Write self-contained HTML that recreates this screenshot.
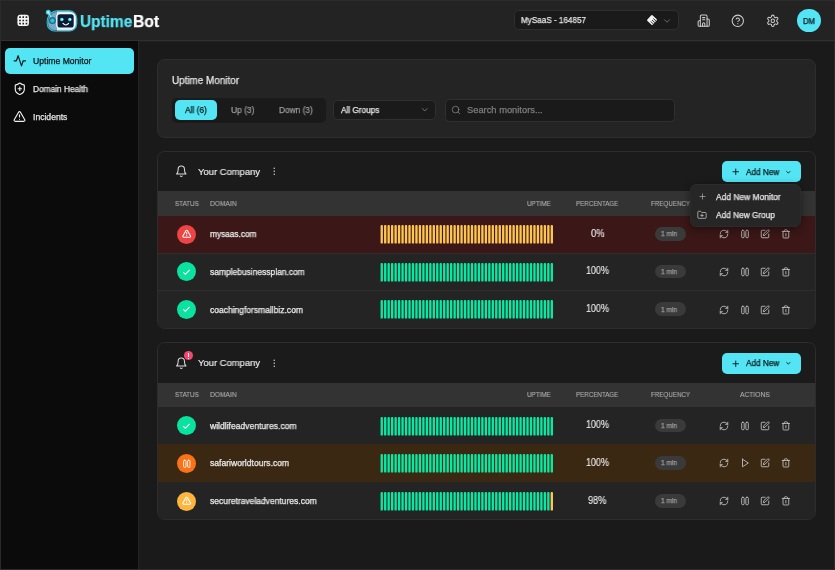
<!DOCTYPE html>
<html lang="en"><head><meta charset="utf-8"><title>UptimeBot - Uptime Monitor</title>
<style>
html,body{margin:0;padding:0;background:#1a1a1a;}
body{width:835px;height:570px;position:relative;overflow:hidden;font-family:"Liberation Sans",sans-serif;}
.b{position:absolute;}
.i{position:absolute;overflow:visible;}
.t{position:absolute;white-space:nowrap;line-height:1;will-change:transform;transform-origin:0 0;}
</style></head><body>
<div class="b" style="left:0px;top:0px;width:835px;height:570px;background:#1a1a1a;border-radius:0px;"></div>
<header>
<div class="b" style="left:0px;top:0px;width:835px;height:40px;background:#232323;border-radius:0px;"></div>
<div class="b" style="left:0px;top:40px;width:835px;height:1px;background:#303030;border-radius:0px;"></div>
<div class="b" style="left:0px;top:41px;width:835px;height:1px;background:#212121;border-radius:0px;"></div>
<svg class="i" style="left:16.9px;top:13.6px" width="12.4" height="12.8" viewBox="0 0 24 24" fill="none" stroke="#f6f6f6" stroke-width="3.1" stroke-linecap="round" stroke-linejoin="round"><rect x="2.500" y="2.500" width="19" height="19" rx="3"/><path d="M2.500 9h19M2.500 15.200h19M9 2.500v19M15.200 2.500v19"/></svg>
<svg class="i" style="left:44px;top:8px" width="35" height="25" viewBox="44 8 35 25">
<path d="M48.400 12.400 L51.600 18" stroke="#2fd3e8" stroke-width="2.600" stroke-linecap="round"/>
<circle cx="48.300" cy="12.300" r="2.500" fill="#2fd3e8"/>
<path d="M58 10.300 H69.300 a8 8 0 0 1 8 8 V23.600 a8 8 0 0 1 -8 8 H54.700 a8 8 0 0 1 -8 -8 V21.600 a11.300 11.300 0 0 1 11.300 -11.300 Z" fill="#2fd3e8"/>
<path d="M58 11.400 H69.200 a7 7 0 0 1 7 7 V23.500 a7 7 0 0 1 -7 7 H54.800 a7 7 0 0 1 -7 -7 V21.600 a10.200 10.200 0 0 1 10.200 -10.200 Z" fill="#7aa9c8" stroke="#123a5a" stroke-width="0.500"/>
<path d="M57 11.450 H69.200 a7 7 0 0 1 7 7 V23.500 a7 7 0 0 1 -7 7 H57 Z" fill="#d6ebf8"/>
<path d="M48.500 12.500 L51.500 17.800" stroke="#c9eef7" stroke-width="0.900" stroke-linecap="round"/>
<circle cx="48.300" cy="12.300" r="1.150" fill="#eafcff"/>
<circle cx="52.400" cy="20.600" r="3.500" fill="#176f88"/>
<circle cx="52.400" cy="20.600" r="2.200" fill="#36bdd6"/>
<rect x="56.200" y="13" width="18.800" height="15.800" rx="3.600" fill="#f4f9fc"/>
<rect x="57.500" y="14.300" width="16.200" height="13.200" rx="2.600" fill="#0b1d36"/>
<circle cx="61.800" cy="19.600" r="1.750" fill="#4fdff1"/><circle cx="62.200" cy="19.200" r="0.700" fill="#fff"/>
<circle cx="69.800" cy="19.600" r="1.750" fill="#4fdff1"/><circle cx="70.200" cy="19.200" r="0.700" fill="#fff"/>
<path d="M63 23.400 Q65.800 26.600 68.600 23.400" stroke="#ffffff" stroke-width="1.200" fill="none" stroke-linecap="round"/>
</svg>
<div class="b" style="left:513.5px;top:10.3px;width:165px;height:20px;background:#1a1a1a;border-radius:4.5px;border:1px solid #2f2f2f;box-sizing:border-box;"></div>
<svg class="i" style="left:645.5px;top:14px" width="12" height="12" viewBox="0 0 24 24"><g transform="rotate(42 12 12)"><rect x="4.500" y="4.500" width="15" height="15" rx="2" fill="#f3f3f3"/><path d="M12 8h8M12 12h8M12 16h8" stroke="#1a1a1a" stroke-width="1.600"/></g></svg>
<svg class="i" style="left:662.40px;top:15.70px;z-index:0" width="10" height="10" viewBox="0 0 24 24" fill="none" stroke="#7a7a7a" stroke-width="2" stroke-linecap="round" stroke-linejoin="round" ><path d="m6 9 6 6 6-6"/></svg>
<svg class="i" style="left:696.70px;top:13.80px;z-index:0" width="13.4" height="13.4" viewBox="0 0 24 24" fill="none" stroke="#cfcfcf" stroke-width="1.8" stroke-linecap="round" stroke-linejoin="round" ><path d="M6 22V4a2 2 0 0 1 2-2h8a2 2 0 0 1 2 2v18Z"/><path d="M6 12H4a2 2 0 0 0-2 2v6a2 2 0 0 0 2 2h2"/><path d="M18 9h2a2 2 0 0 1 2 2v9a2 2 0 0 1-2 2h-2"/><path d="M10 6.500h4"/><path d="M10 10.500h4"/><path d="M10 22v-4.500a2 2 0 0 1 4 0V22"/></svg>
<svg class="i" style="left:731.20px;top:13.80px;z-index:0" width="13.6" height="13.6" viewBox="0 0 24 24" fill="none" stroke="#cfcfcf" stroke-width="1.8" stroke-linecap="round" stroke-linejoin="round" ><circle cx="12" cy="12" r="10"/><path d="M9.090 9a3 3 0 0 1 5.830 1c0 2-3 3-3 3"/><path d="M12 17h.01"/></svg>
<svg class="i" style="left:765.90px;top:13.80px;z-index:0" width="13.6" height="13.6" viewBox="0 0 24 24" fill="none" stroke="#cfcfcf" stroke-width="1.8" stroke-linecap="round" stroke-linejoin="round" ><path d="M12.220 2h-.440a2 2 0 0 0-2 2v.180a2 2 0 0 1-1 1.730l-.430.250a2 2 0 0 1-2 0l-.150-.080a2 2 0 0 0-2.730.730l-.220.380a2 2 0 0 0 .730 2.730l.150.100a2 2 0 0 1 1 1.720v.510a2 2 0 0 1-1 1.740l-.150.090a2 2 0 0 0-.730 2.730l.220.380a2 2 0 0 0 2.730.730l.150-.080a2 2 0 0 1 2 0l.430.250a2 2 0 0 1 1 1.730V20a2 2 0 0 0 2 2h.440a2 2 0 0 0 2-2v-.180a2 2 0 0 1 1-1.730l.430-.250a2 2 0 0 1 2 0l.150.080a2 2 0 0 0 2.730-.730l.220-.390a2 2 0 0 0-.730-2.730l-.150-.080a2 2 0 0 1-1-1.740v-.500a2 2 0 0 1 1-1.740l.150-.090a2 2 0 0 0 .730-2.730l-.220-.380a2 2 0 0 0-2.730-.730l-.150.080a2 2 0 0 1-2 0l-.430-.250a2 2 0 0 1-1-1.730V4a2 2 0 0 0-2-2z"/><circle cx="12" cy="12" r="3"/></svg>
<div class="b" style="left:796.8px;top:8.6px;width:23.8px;height:23.8px;background:#53e5f4;border-radius:13px;"></div>
<span class="t" style="left:80.20px;top:13.12px;font-size:16.4px;transform:scaleX(0.9413);color:#53e5f4;font-weight:700;z-index:1;-webkit-text-stroke:0.25px #53e5f4">Uptime</span>
<span class="t" style="left:132.70px;top:13.12px;font-size:16.4px;transform:scaleX(0.9593);color:#ffffff;font-weight:700;z-index:1;-webkit-text-stroke:0.25px #ffffff">Bot</span>
<span class="t" style="left:520.70px;top:16.20px;font-size:8.8px;transform:scaleX(0.9230);color:#e6e6e6;z-index:1;-webkit-text-stroke:0.25px #e6e6e6">MySaaS - 164857</span>
<span class="t" style="left:802.50px;top:16.75px;font-size:8.3px;transform:scaleX(0.9220);color:#0c1416;z-index:1;-webkit-text-stroke:0.25px #0c1416">DM</span>
</header>
<nav>
<div class="b" style="left:0px;top:41px;width:138px;height:529px;background:#0b0b0b;border-radius:0px;"></div>
<div class="b" style="left:138px;top:41px;width:1px;height:529px;background:#242424;border-radius:0px;"></div>
<div class="b" style="left:5px;top:48px;width:129px;height:25.7px;background:#53e5f4;border-radius:5px;"></div>
<svg class="i" style="left:13.10px;top:54.20px;z-index:0" width="13.6" height="13.6" viewBox="0 0 24 24" fill="none" stroke="#0a1a1e" stroke-width="2.1" stroke-linecap="round" stroke-linejoin="round" ><path d="M22 12h-4l-3 9L9 3l-3 9H2"/></svg>
<svg class="i" style="left:12.90px;top:82.10px;z-index:0" width="13.6" height="13.6" viewBox="0 0 24 24" fill="none" stroke="#f0f0f0" stroke-width="2" stroke-linecap="round" stroke-linejoin="round" ><path d="M20 13c0 5-3.5 7.500-7.660 8.950a1 1 0 0 1-.670-.010C7.500 20.500 4 18 4 13V6a1 1 0 0 1 1-1c2 0 4.500-1.200 6.240-2.720a1.170 1.170 0 0 1 1.520 0C14.510 3.810 17 5 19 5a1 1 0 0 1 1 1z"/><path d="M9 12h6"/><path d="M12 9v6"/></svg>
<svg class="i" style="left:13.30px;top:109.90px;z-index:0" width="13" height="13" viewBox="0 0 24 24" fill="none" stroke="#f0f0f0" stroke-width="2.1" stroke-linecap="round" stroke-linejoin="round" ><path d="m21.730 18-8-14a2 2 0 0 0-3.480 0l-8 14A2 2 0 0 0 4 21h16a2 2 0 0 0 1.730-3"/><path d="M12 9v4"/><path d="M12 17h.01"/></svg>
<span class="t" style="left:32.70px;top:56.80px;font-size:8.6px;transform:scaleX(1.0006);color:#0c1416;z-index:1;-webkit-text-stroke:0.25px #0c1416">Uptime Monitor</span>
<span class="t" style="left:32.70px;top:84.70px;font-size:8.6px;transform:scaleX(0.9676);color:#e6e6e6;z-index:1;-webkit-text-stroke:0.25px #e6e6e6">Domain Health</span>
<span class="t" style="left:32.70px;top:112.80px;font-size:8.6px;transform:scaleX(0.9969);color:#e6e6e6;z-index:1;-webkit-text-stroke:0.25px #e6e6e6">Incidents</span>
</nav>
<main>
<section>
<div class="b" style="left:157px;top:59.4px;width:658.7px;height:78.2px;background:#242424;border-radius:7.5px;border:1px solid #2e2e2e;box-sizing:border-box;"></div>
<div class="b" style="left:172px;top:97.5px;width:154px;height:25px;background:#1a1a1a;border-radius:5px;"></div>
<div class="b" style="left:175.3px;top:100.4px;width:41.4px;height:19.4px;background:#53e5f4;border-radius:5px;"></div>
<div class="b" style="left:333.2px;top:100px;width:103.2px;height:20.2px;background:#1a1a1a;border-radius:4.5px;border:1px solid #303030;box-sizing:border-box;"></div>
<svg class="i" style="left:420.05px;top:105.45px;z-index:0" width="9.5" height="9.5" viewBox="0 0 24 24" fill="none" stroke="#8a8a8a" stroke-width="2" stroke-linecap="round" stroke-linejoin="round" ><path d="m6 9 6 6 6-6"/></svg>
<div class="b" style="left:444.5px;top:98.5px;width:230.5px;height:23px;background:#1a1a1a;border-radius:4.5px;border:1px solid #303030;box-sizing:border-box;"></div>
<svg class="i" style="left:450.50px;top:105.00px;z-index:0" width="10" height="10" viewBox="0 0 24 24" fill="none" stroke="#7d7d7d" stroke-width="2" stroke-linecap="round" stroke-linejoin="round" ><circle cx="11" cy="11" r="8"/><path d="m21 21-4.300-4.300"/></svg>
<span class="t" style="left:171.80px;top:75.82px;font-size:10.2px;transform:scaleX(0.9714);color:#e6e6e6;z-index:1;-webkit-text-stroke:0.25px #e6e6e6">Uptime Monitor</span>
<span class="t" style="left:185.20px;top:105.70px;font-size:8.8px;transform:scaleX(0.9485);color:#0c1416;z-index:1;-webkit-text-stroke:0.25px #0c1416">All (6)</span>
<span class="t" style="left:230.90px;top:105.70px;font-size:8.8px;transform:scaleX(0.9610);color:#9a9a9a;z-index:1;-webkit-text-stroke:0.25px #9a9a9a">Up (3)</span>
<span class="t" style="left:278.70px;top:105.70px;font-size:8.8px;transform:scaleX(0.9471);color:#9a9a9a;z-index:1;-webkit-text-stroke:0.25px #9a9a9a">Down (3)</span>
<span class="t" style="left:340.60px;top:106.00px;font-size:8.8px;transform:scaleX(0.9324);color:#e6e6e6;z-index:1;-webkit-text-stroke:0.25px #e6e6e6">All Groups</span>
<span class="t" style="left:467.30px;top:105.50px;font-size:8.8px;transform:scaleX(1.0604);color:#7d7d7d;z-index:1;-webkit-text-stroke:0.25px #7d7d7d">Search monitors...</span>
</section>
<section>
<div class="b" style="left:157px;top:151px;width:659px;height:178px;background:#1b1b1b;border-radius:7.500px;border:1px solid #2d2d2d;box-sizing:border-box;overflow:hidden"><div class="b" style="left:0;top:39px;width:660px;height:25px;background:#333333"></div><div class="b" style="left:0;top:64px;width:660px;height:39px;background:#3b1717;border-top:1px solid #3b1717;box-sizing:border-box"></div><div class="b" style="left:0;top:101px;width:660px;height:39px;background:#242424;border-top:1px solid #2e2e2e;box-sizing:border-box"></div><div class="b" style="left:0;top:138px;width:660px;height:40px;background:#242424;border-top:1px solid #2e2e2e;box-sizing:border-box"></div></div>
<svg class="i" style="left:174.70px;top:165.30px;z-index:0" width="12.6" height="12.6" viewBox="0 0 24 24" fill="none" stroke="#d8d8d8" stroke-width="2" stroke-linecap="round" stroke-linejoin="round" ><path d="M6 8a6 6 0 0 1 12 0c0 7 3 9 3 9H3s3-2 3-9"/><path d="M10.300 21a1.940 1.940 0 0 0 3.400 0"/></svg>
<svg class="i" style="left:269.25px;top:166.15px;z-index:0" width="10.5" height="10.5" viewBox="0 0 24 24" fill="none" stroke="#d0d0d0" stroke-width="2" stroke-linecap="round" stroke-linejoin="round" ><circle cx="12" cy="5" r="1.700" fill="#d0d0d0" stroke="none"/><circle cx="12" cy="12" r="1.700" fill="#d0d0d0" stroke="none"/><circle cx="12" cy="19" r="1.700" fill="#d0d0d0" stroke="none"/></svg>
<div class="b" style="left:721.7px;top:160.9px;width:79.4px;height:21.4px;background:#53e5f4;border-radius:5px;"></div>
<svg class="i" style="left:730.85px;top:167.05px;z-index:0" width="9.5" height="9.5" viewBox="0 0 24 24" fill="none" stroke="#0c1416" stroke-width="2.3" stroke-linecap="round" stroke-linejoin="round" ><path d="M5 12h14"/><path d="M12 5v14"/></svg>
<svg class="i" style="left:785.00px;top:168.60px;z-index:0" width="6.6" height="6.6" viewBox="0 0 24 24" fill="none" stroke="#0c1416" stroke-width="3.2" stroke-linecap="round" stroke-linejoin="round" ><path d="m6 9 6 6 6-6"/></svg>
<div class="b" style="left:177.1px;top:224.60000000000002px;width:19px;height:19px;background:#ef4444;border-radius:10px;"></div>
<svg class="i" style="left:181.90px;top:228.90px;z-index:0" width="9.4" height="9.4" viewBox="0 0 24 24" fill="none" stroke="#fff" stroke-width="2.7" stroke-linecap="round" stroke-linejoin="round" ><path d="m21.730 18-8-14a2 2 0 0 0-3.480 0l-8 14A2 2 0 0 0 4 21h16a2 2 0 0 0 1.730-3"/><path d="M12 9v4"/><path d="M12 17h.01"/></svg>
<svg class="i" style="left:0;top:225.00px" width="835" height="18.6" viewBox="0 0 835 18.6"><rect x="380.55" y="0" width="2.36" height="18.6" rx="0.900" fill="#fdc650"/><rect x="384.02" y="0" width="2.36" height="18.6" rx="0.900" fill="#fdc650"/><rect x="387.49" y="0" width="2.36" height="18.6" rx="0.900" fill="#fdc650"/><rect x="390.97" y="0" width="2.36" height="18.6" rx="0.900" fill="#fdc650"/><rect x="394.44" y="0" width="2.36" height="18.6" rx="0.900" fill="#fdc650"/><rect x="397.91" y="0" width="2.36" height="18.6" rx="0.900" fill="#fdc650"/><rect x="401.38" y="0" width="2.36" height="18.6" rx="0.900" fill="#fdc650"/><rect x="404.85" y="0" width="2.36" height="18.6" rx="0.900" fill="#fdc650"/><rect x="408.33" y="0" width="2.36" height="18.6" rx="0.900" fill="#fdc650"/><rect x="411.80" y="0" width="2.36" height="18.6" rx="0.900" fill="#fdc650"/><rect x="415.27" y="0" width="2.36" height="18.6" rx="0.900" fill="#fdc650"/><rect x="418.74" y="0" width="2.36" height="18.6" rx="0.900" fill="#fdc650"/><rect x="422.21" y="0" width="2.36" height="18.6" rx="0.900" fill="#fdc650"/><rect x="425.69" y="0" width="2.36" height="18.6" rx="0.900" fill="#fdc650"/><rect x="429.16" y="0" width="2.36" height="18.6" rx="0.900" fill="#fdc650"/><rect x="432.63" y="0" width="2.36" height="18.6" rx="0.900" fill="#fdc650"/><rect x="436.10" y="0" width="2.36" height="18.6" rx="0.900" fill="#fdc650"/><rect x="439.57" y="0" width="2.36" height="18.6" rx="0.900" fill="#fdc650"/><rect x="443.05" y="0" width="2.36" height="18.6" rx="0.900" fill="#fdc650"/><rect x="446.52" y="0" width="2.36" height="18.6" rx="0.900" fill="#fdc650"/><rect x="449.99" y="0" width="2.36" height="18.6" rx="0.900" fill="#fdc650"/><rect x="453.46" y="0" width="2.36" height="18.6" rx="0.900" fill="#fdc650"/><rect x="456.93" y="0" width="2.36" height="18.6" rx="0.900" fill="#fdc650"/><rect x="460.41" y="0" width="2.36" height="18.6" rx="0.900" fill="#fdc650"/><rect x="463.88" y="0" width="2.36" height="18.6" rx="0.900" fill="#fdc650"/><rect x="467.35" y="0" width="2.36" height="18.6" rx="0.900" fill="#fdc650"/><rect x="470.82" y="0" width="2.36" height="18.6" rx="0.900" fill="#fdc650"/><rect x="474.29" y="0" width="2.36" height="18.6" rx="0.900" fill="#fdc650"/><rect x="477.77" y="0" width="2.36" height="18.6" rx="0.900" fill="#fdc650"/><rect x="481.24" y="0" width="2.36" height="18.6" rx="0.900" fill="#fdc650"/><rect x="484.71" y="0" width="2.36" height="18.6" rx="0.900" fill="#fdc650"/><rect x="488.18" y="0" width="2.36" height="18.6" rx="0.900" fill="#fdc650"/><rect x="491.65" y="0" width="2.36" height="18.6" rx="0.900" fill="#fdc650"/><rect x="495.13" y="0" width="2.36" height="18.6" rx="0.900" fill="#fdc650"/><rect x="498.60" y="0" width="2.36" height="18.6" rx="0.900" fill="#fdc650"/><rect x="502.07" y="0" width="2.36" height="18.6" rx="0.900" fill="#fdc650"/><rect x="505.54" y="0" width="2.36" height="18.6" rx="0.900" fill="#fdc650"/><rect x="509.01" y="0" width="2.36" height="18.6" rx="0.900" fill="#fdc650"/><rect x="512.49" y="0" width="2.36" height="18.6" rx="0.900" fill="#fdc650"/><rect x="515.96" y="0" width="2.36" height="18.6" rx="0.900" fill="#fdc650"/><rect x="519.43" y="0" width="2.36" height="18.6" rx="0.900" fill="#fdc650"/><rect x="522.90" y="0" width="2.36" height="18.6" rx="0.900" fill="#fdc650"/><rect x="526.37" y="0" width="2.36" height="18.6" rx="0.900" fill="#fdc650"/><rect x="529.85" y="0" width="2.36" height="18.6" rx="0.900" fill="#fdc650"/><rect x="533.32" y="0" width="2.36" height="18.6" rx="0.900" fill="#fdc650"/><rect x="536.79" y="0" width="2.36" height="18.6" rx="0.900" fill="#fdc650"/><rect x="540.26" y="0" width="2.36" height="18.6" rx="0.900" fill="#fdc650"/><rect x="543.73" y="0" width="2.36" height="18.6" rx="0.900" fill="#fdc650"/><rect x="547.21" y="0" width="2.36" height="18.6" rx="0.900" fill="#fdc650"/><rect x="550.68" y="0" width="2.36" height="18.6" rx="0.900" fill="#fdc650"/></svg>
<div class="b" style="left:654.7px;top:227.10000000000002px;width:30.9px;height:13.6px;background:#3a3a3a;border-radius:7px;"></div>
<svg class="i" style="left:718.60px;top:229.30px;z-index:0" width="10" height="10" viewBox="0 0 24 24" fill="none" stroke="#c9c9c9" stroke-width="2" stroke-linecap="round" stroke-linejoin="round" ><path d="M3 12a9 9 0 0 1 9-9 9.750 9.750 0 0 1 6.740 2.740L21 8"/><path d="M21 3v5h-5"/><path d="M21 12a9 9 0 0 1-9 9 9.750 9.750 0 0 1-6.740-2.740L3 16"/><path d="M8 16H3v5"/></svg>
<svg class="i" style="left:739.60px;top:229.30px;z-index:0" width="10" height="10" viewBox="0 0 24 24" fill="none" stroke="#c9c9c9" stroke-width="2" stroke-linecap="round" stroke-linejoin="round" ><rect x="14" y="3" width="6" height="18" rx="2.500"/><rect x="4" y="3" width="6" height="18" rx="2.500"/></svg>
<svg class="i" style="left:759.90px;top:229.30px;z-index:0" width="10" height="10" viewBox="0 0 24 24" fill="none" stroke="#c9c9c9" stroke-width="2" stroke-linecap="round" stroke-linejoin="round" ><path d="M12 3H5a2 2 0 0 0-2 2v14a2 2 0 0 0 2 2h14a2 2 0 0 0 2-2v-7"/><path d="M18.375 2.625a2.121 2.121 0 1 1 3 3L12 15l-4 1 1-4Z"/></svg>
<svg class="i" style="left:781.10px;top:229.40px;z-index:0" width="9.8" height="9.8" viewBox="0 0 24 24" fill="none" stroke="#c9c9c9" stroke-width="2" stroke-linecap="round" stroke-linejoin="round" ><path d="M3 6h18"/><path d="M19 6v14a2 2 0 0 1-2 2H7a2 2 0 0 1-2-2V6"/><path d="M8 6V4a2 2 0 0 1 2-2h4a2 2 0 0 1 2 2v2"/><path d="M12 11v6"/></svg>
<div class="b" style="left:177.1px;top:262.3px;width:19px;height:19px;background:#0ae29f;border-radius:10px;"></div>
<svg class="i" style="left:182.15px;top:267.65px;z-index:0" width="8.9" height="8.9" viewBox="0 0 24 24" fill="none" stroke="#fff" stroke-width="2.9" stroke-linecap="round" stroke-linejoin="round" ><path d="M20 6 9 17l-5-5"/></svg>
<svg class="i" style="left:0;top:262.70px" width="835" height="18.6" viewBox="0 0 835 18.6"><rect x="380.55" y="0" width="2.36" height="18.6" rx="0.900" fill="#08eaa4"/><rect x="384.02" y="0" width="2.36" height="18.6" rx="0.900" fill="#08eaa4"/><rect x="387.49" y="0" width="2.36" height="18.6" rx="0.900" fill="#08eaa4"/><rect x="390.97" y="0" width="2.36" height="18.6" rx="0.900" fill="#08eaa4"/><rect x="394.44" y="0" width="2.36" height="18.6" rx="0.900" fill="#08eaa4"/><rect x="397.91" y="0" width="2.36" height="18.6" rx="0.900" fill="#08eaa4"/><rect x="401.38" y="0" width="2.36" height="18.6" rx="0.900" fill="#08eaa4"/><rect x="404.85" y="0" width="2.36" height="18.6" rx="0.900" fill="#08eaa4"/><rect x="408.33" y="0" width="2.36" height="18.6" rx="0.900" fill="#08eaa4"/><rect x="411.80" y="0" width="2.36" height="18.6" rx="0.900" fill="#08eaa4"/><rect x="415.27" y="0" width="2.36" height="18.6" rx="0.900" fill="#08eaa4"/><rect x="418.74" y="0" width="2.36" height="18.6" rx="0.900" fill="#08eaa4"/><rect x="422.21" y="0" width="2.36" height="18.6" rx="0.900" fill="#08eaa4"/><rect x="425.69" y="0" width="2.36" height="18.6" rx="0.900" fill="#08eaa4"/><rect x="429.16" y="0" width="2.36" height="18.6" rx="0.900" fill="#08eaa4"/><rect x="432.63" y="0" width="2.36" height="18.6" rx="0.900" fill="#08eaa4"/><rect x="436.10" y="0" width="2.36" height="18.6" rx="0.900" fill="#08eaa4"/><rect x="439.57" y="0" width="2.36" height="18.6" rx="0.900" fill="#08eaa4"/><rect x="443.05" y="0" width="2.36" height="18.6" rx="0.900" fill="#08eaa4"/><rect x="446.52" y="0" width="2.36" height="18.6" rx="0.900" fill="#08eaa4"/><rect x="449.99" y="0" width="2.36" height="18.6" rx="0.900" fill="#08eaa4"/><rect x="453.46" y="0" width="2.36" height="18.6" rx="0.900" fill="#08eaa4"/><rect x="456.93" y="0" width="2.36" height="18.6" rx="0.900" fill="#08eaa4"/><rect x="460.41" y="0" width="2.36" height="18.6" rx="0.900" fill="#08eaa4"/><rect x="463.88" y="0" width="2.36" height="18.6" rx="0.900" fill="#08eaa4"/><rect x="467.35" y="0" width="2.36" height="18.6" rx="0.900" fill="#08eaa4"/><rect x="470.82" y="0" width="2.36" height="18.6" rx="0.900" fill="#08eaa4"/><rect x="474.29" y="0" width="2.36" height="18.6" rx="0.900" fill="#08eaa4"/><rect x="477.77" y="0" width="2.36" height="18.6" rx="0.900" fill="#08eaa4"/><rect x="481.24" y="0" width="2.36" height="18.6" rx="0.900" fill="#08eaa4"/><rect x="484.71" y="0" width="2.36" height="18.6" rx="0.900" fill="#08eaa4"/><rect x="488.18" y="0" width="2.36" height="18.6" rx="0.900" fill="#08eaa4"/><rect x="491.65" y="0" width="2.36" height="18.6" rx="0.900" fill="#08eaa4"/><rect x="495.13" y="0" width="2.36" height="18.6" rx="0.900" fill="#08eaa4"/><rect x="498.60" y="0" width="2.36" height="18.6" rx="0.900" fill="#08eaa4"/><rect x="502.07" y="0" width="2.36" height="18.6" rx="0.900" fill="#08eaa4"/><rect x="505.54" y="0" width="2.36" height="18.6" rx="0.900" fill="#08eaa4"/><rect x="509.01" y="0" width="2.36" height="18.6" rx="0.900" fill="#08eaa4"/><rect x="512.49" y="0" width="2.36" height="18.6" rx="0.900" fill="#08eaa4"/><rect x="515.96" y="0" width="2.36" height="18.6" rx="0.900" fill="#08eaa4"/><rect x="519.43" y="0" width="2.36" height="18.6" rx="0.900" fill="#08eaa4"/><rect x="522.90" y="0" width="2.36" height="18.6" rx="0.900" fill="#08eaa4"/><rect x="526.37" y="0" width="2.36" height="18.6" rx="0.900" fill="#08eaa4"/><rect x="529.85" y="0" width="2.36" height="18.6" rx="0.900" fill="#08eaa4"/><rect x="533.32" y="0" width="2.36" height="18.6" rx="0.900" fill="#08eaa4"/><rect x="536.79" y="0" width="2.36" height="18.6" rx="0.900" fill="#08eaa4"/><rect x="540.26" y="0" width="2.36" height="18.6" rx="0.900" fill="#08eaa4"/><rect x="543.73" y="0" width="2.36" height="18.6" rx="0.900" fill="#08eaa4"/><rect x="547.21" y="0" width="2.36" height="18.6" rx="0.900" fill="#08eaa4"/><rect x="550.68" y="0" width="2.36" height="18.6" rx="0.900" fill="#08eaa4"/></svg>
<div class="b" style="left:654.7px;top:264.8px;width:30.9px;height:13.6px;background:#3a3a3a;border-radius:7px;"></div>
<svg class="i" style="left:718.60px;top:267.00px;z-index:0" width="10" height="10" viewBox="0 0 24 24" fill="none" stroke="#c9c9c9" stroke-width="2" stroke-linecap="round" stroke-linejoin="round" ><path d="M3 12a9 9 0 0 1 9-9 9.750 9.750 0 0 1 6.740 2.740L21 8"/><path d="M21 3v5h-5"/><path d="M21 12a9 9 0 0 1-9 9 9.750 9.750 0 0 1-6.740-2.740L3 16"/><path d="M8 16H3v5"/></svg>
<svg class="i" style="left:739.60px;top:267.00px;z-index:0" width="10" height="10" viewBox="0 0 24 24" fill="none" stroke="#c9c9c9" stroke-width="2" stroke-linecap="round" stroke-linejoin="round" ><rect x="14" y="3" width="6" height="18" rx="2.500"/><rect x="4" y="3" width="6" height="18" rx="2.500"/></svg>
<svg class="i" style="left:759.90px;top:267.00px;z-index:0" width="10" height="10" viewBox="0 0 24 24" fill="none" stroke="#c9c9c9" stroke-width="2" stroke-linecap="round" stroke-linejoin="round" ><path d="M12 3H5a2 2 0 0 0-2 2v14a2 2 0 0 0 2 2h14a2 2 0 0 0 2-2v-7"/><path d="M18.375 2.625a2.121 2.121 0 1 1 3 3L12 15l-4 1 1-4Z"/></svg>
<svg class="i" style="left:781.10px;top:267.10px;z-index:0" width="9.8" height="9.8" viewBox="0 0 24 24" fill="none" stroke="#c9c9c9" stroke-width="2" stroke-linecap="round" stroke-linejoin="round" ><path d="M3 6h18"/><path d="M19 6v14a2 2 0 0 1-2 2H7a2 2 0 0 1-2-2V6"/><path d="M8 6V4a2 2 0 0 1 2-2h4a2 2 0 0 1 2 2v2"/><path d="M12 11v6"/></svg>
<div class="b" style="left:177.1px;top:299.8px;width:19px;height:19px;background:#0ae29f;border-radius:10px;"></div>
<svg class="i" style="left:182.15px;top:305.15px;z-index:0" width="8.9" height="8.9" viewBox="0 0 24 24" fill="none" stroke="#fff" stroke-width="2.9" stroke-linecap="round" stroke-linejoin="round" ><path d="M20 6 9 17l-5-5"/></svg>
<svg class="i" style="left:0;top:300.20px" width="835" height="18.6" viewBox="0 0 835 18.6"><rect x="380.55" y="0" width="2.36" height="18.6" rx="0.900" fill="#08eaa4"/><rect x="384.02" y="0" width="2.36" height="18.6" rx="0.900" fill="#08eaa4"/><rect x="387.49" y="0" width="2.36" height="18.6" rx="0.900" fill="#08eaa4"/><rect x="390.97" y="0" width="2.36" height="18.6" rx="0.900" fill="#08eaa4"/><rect x="394.44" y="0" width="2.36" height="18.6" rx="0.900" fill="#08eaa4"/><rect x="397.91" y="0" width="2.36" height="18.6" rx="0.900" fill="#08eaa4"/><rect x="401.38" y="0" width="2.36" height="18.6" rx="0.900" fill="#08eaa4"/><rect x="404.85" y="0" width="2.36" height="18.6" rx="0.900" fill="#08eaa4"/><rect x="408.33" y="0" width="2.36" height="18.6" rx="0.900" fill="#08eaa4"/><rect x="411.80" y="0" width="2.36" height="18.6" rx="0.900" fill="#08eaa4"/><rect x="415.27" y="0" width="2.36" height="18.6" rx="0.900" fill="#08eaa4"/><rect x="418.74" y="0" width="2.36" height="18.6" rx="0.900" fill="#08eaa4"/><rect x="422.21" y="0" width="2.36" height="18.6" rx="0.900" fill="#08eaa4"/><rect x="425.69" y="0" width="2.36" height="18.6" rx="0.900" fill="#08eaa4"/><rect x="429.16" y="0" width="2.36" height="18.6" rx="0.900" fill="#08eaa4"/><rect x="432.63" y="0" width="2.36" height="18.6" rx="0.900" fill="#08eaa4"/><rect x="436.10" y="0" width="2.36" height="18.6" rx="0.900" fill="#08eaa4"/><rect x="439.57" y="0" width="2.36" height="18.6" rx="0.900" fill="#08eaa4"/><rect x="443.05" y="0" width="2.36" height="18.6" rx="0.900" fill="#08eaa4"/><rect x="446.52" y="0" width="2.36" height="18.6" rx="0.900" fill="#08eaa4"/><rect x="449.99" y="0" width="2.36" height="18.6" rx="0.900" fill="#08eaa4"/><rect x="453.46" y="0" width="2.36" height="18.6" rx="0.900" fill="#08eaa4"/><rect x="456.93" y="0" width="2.36" height="18.6" rx="0.900" fill="#08eaa4"/><rect x="460.41" y="0" width="2.36" height="18.6" rx="0.900" fill="#08eaa4"/><rect x="463.88" y="0" width="2.36" height="18.6" rx="0.900" fill="#08eaa4"/><rect x="467.35" y="0" width="2.36" height="18.6" rx="0.900" fill="#08eaa4"/><rect x="470.82" y="0" width="2.36" height="18.6" rx="0.900" fill="#08eaa4"/><rect x="474.29" y="0" width="2.36" height="18.6" rx="0.900" fill="#08eaa4"/><rect x="477.77" y="0" width="2.36" height="18.6" rx="0.900" fill="#08eaa4"/><rect x="481.24" y="0" width="2.36" height="18.6" rx="0.900" fill="#08eaa4"/><rect x="484.71" y="0" width="2.36" height="18.6" rx="0.900" fill="#08eaa4"/><rect x="488.18" y="0" width="2.36" height="18.6" rx="0.900" fill="#08eaa4"/><rect x="491.65" y="0" width="2.36" height="18.6" rx="0.900" fill="#08eaa4"/><rect x="495.13" y="0" width="2.36" height="18.6" rx="0.900" fill="#08eaa4"/><rect x="498.60" y="0" width="2.36" height="18.6" rx="0.900" fill="#08eaa4"/><rect x="502.07" y="0" width="2.36" height="18.6" rx="0.900" fill="#08eaa4"/><rect x="505.54" y="0" width="2.36" height="18.6" rx="0.900" fill="#08eaa4"/><rect x="509.01" y="0" width="2.36" height="18.6" rx="0.900" fill="#08eaa4"/><rect x="512.49" y="0" width="2.36" height="18.6" rx="0.900" fill="#08eaa4"/><rect x="515.96" y="0" width="2.36" height="18.6" rx="0.900" fill="#08eaa4"/><rect x="519.43" y="0" width="2.36" height="18.6" rx="0.900" fill="#08eaa4"/><rect x="522.90" y="0" width="2.36" height="18.6" rx="0.900" fill="#08eaa4"/><rect x="526.37" y="0" width="2.36" height="18.6" rx="0.900" fill="#08eaa4"/><rect x="529.85" y="0" width="2.36" height="18.6" rx="0.900" fill="#08eaa4"/><rect x="533.32" y="0" width="2.36" height="18.6" rx="0.900" fill="#08eaa4"/><rect x="536.79" y="0" width="2.36" height="18.6" rx="0.900" fill="#08eaa4"/><rect x="540.26" y="0" width="2.36" height="18.6" rx="0.900" fill="#08eaa4"/><rect x="543.73" y="0" width="2.36" height="18.6" rx="0.900" fill="#08eaa4"/><rect x="547.21" y="0" width="2.36" height="18.6" rx="0.900" fill="#08eaa4"/><rect x="550.68" y="0" width="2.36" height="18.6" rx="0.900" fill="#08eaa4"/></svg>
<div class="b" style="left:654.7px;top:302.3px;width:30.9px;height:13.6px;background:#3a3a3a;border-radius:7px;"></div>
<svg class="i" style="left:718.60px;top:304.50px;z-index:0" width="10" height="10" viewBox="0 0 24 24" fill="none" stroke="#c9c9c9" stroke-width="2" stroke-linecap="round" stroke-linejoin="round" ><path d="M3 12a9 9 0 0 1 9-9 9.750 9.750 0 0 1 6.740 2.740L21 8"/><path d="M21 3v5h-5"/><path d="M21 12a9 9 0 0 1-9 9 9.750 9.750 0 0 1-6.740-2.740L3 16"/><path d="M8 16H3v5"/></svg>
<svg class="i" style="left:739.60px;top:304.50px;z-index:0" width="10" height="10" viewBox="0 0 24 24" fill="none" stroke="#c9c9c9" stroke-width="2" stroke-linecap="round" stroke-linejoin="round" ><rect x="14" y="3" width="6" height="18" rx="2.500"/><rect x="4" y="3" width="6" height="18" rx="2.500"/></svg>
<svg class="i" style="left:759.90px;top:304.50px;z-index:0" width="10" height="10" viewBox="0 0 24 24" fill="none" stroke="#c9c9c9" stroke-width="2" stroke-linecap="round" stroke-linejoin="round" ><path d="M12 3H5a2 2 0 0 0-2 2v14a2 2 0 0 0 2 2h14a2 2 0 0 0 2-2v-7"/><path d="M18.375 2.625a2.121 2.121 0 1 1 3 3L12 15l-4 1 1-4Z"/></svg>
<svg class="i" style="left:781.10px;top:304.60px;z-index:0" width="9.8" height="9.8" viewBox="0 0 24 24" fill="none" stroke="#c9c9c9" stroke-width="2" stroke-linecap="round" stroke-linejoin="round" ><path d="M3 6h18"/><path d="M19 6v14a2 2 0 0 1-2 2H7a2 2 0 0 1-2-2V6"/><path d="M8 6V4a2 2 0 0 1 2-2h4a2 2 0 0 1 2 2v2"/><path d="M12 11v6"/></svg>
<span class="t" style="left:197.80px;top:166.81px;font-size:9.6px;transform:scaleX(0.9840);color:#ededed;z-index:1;-webkit-text-stroke:0.15px #ededed">Your Company</span>
<span class="t" style="left:746.10px;top:167.70px;font-size:8.6px;transform:scaleX(0.9520);color:#0c1416;z-index:1;-webkit-text-stroke:0.25px #0c1416">Add New</span>
<span class="t" style="left:174.60px;top:199.68px;font-size:7px;transform:scaleX(0.8955);color:#b0b0b0;z-index:1;-webkit-text-stroke:0.1px #b0b0b0">STATUS</span>
<span class="t" style="left:210.40px;top:199.68px;font-size:7px;transform:scaleX(0.9500);color:#b0b0b0;z-index:1;-webkit-text-stroke:0.1px #b0b0b0">DOMAIN</span>
<span class="t" style="left:527.10px;top:199.68px;font-size:7px;transform:scaleX(0.8997);color:#b0b0b0;z-index:1;-webkit-text-stroke:0.1px #b0b0b0">UPTIME</span>
<span class="t" style="left:575.80px;top:199.68px;font-size:7px;transform:scaleX(0.8864);color:#b0b0b0;z-index:1;-webkit-text-stroke:0.1px #b0b0b0">PERCENTAGE</span>
<span class="t" style="left:650.50px;top:199.68px;font-size:7px;transform:scaleX(0.8896);color:#b0b0b0;z-index:1;-webkit-text-stroke:0.1px #b0b0b0">FREQUENCY</span>
<span class="t" style="left:739.90px;top:199.68px;font-size:7px;transform:scaleX(0.9542);color:#b0b0b0;z-index:1;-webkit-text-stroke:0.1px #b0b0b0">ACTIONS</span>
<span class="t" style="left:210.20px;top:230.47px;font-size:8.6px;transform:scaleX(0.9640);color:#ededed;z-index:1;-webkit-text-stroke:0.25px #ededed">mysaas.com</span>
<span class="t" style="left:590.60px;top:228.52px;font-size:10px;transform:scaleX(0.9410);color:#f2f2f2;z-index:1;-webkit-text-stroke:0.1px #f2f2f2">0%</span>
<span class="t" style="left:661.20px;top:230.38px;font-size:7.2px;transform:scaleX(0.9159);color:#9c9c9c;z-index:1;-webkit-text-stroke:0.25px #9c9c9c">1 min</span>
<span class="t" style="left:210.20px;top:268.17px;font-size:8.6px;transform:scaleX(0.9824);color:#ededed;z-index:1;-webkit-text-stroke:0.25px #ededed">samplebusinessplan.com</span>
<span class="t" style="left:585.90px;top:266.22px;font-size:10px;transform:scaleX(0.8953);color:#f2f2f2;z-index:1;-webkit-text-stroke:0.1px #f2f2f2">100%</span>
<span class="t" style="left:661.20px;top:268.08px;font-size:7.2px;transform:scaleX(0.9159);color:#9c9c9c;z-index:1;-webkit-text-stroke:0.25px #9c9c9c">1 min</span>
<span class="t" style="left:210.20px;top:305.67px;font-size:8.6px;transform:scaleX(0.9873);color:#ededed;z-index:1;-webkit-text-stroke:0.25px #ededed">coachingforsmallbiz.com</span>
<span class="t" style="left:585.90px;top:303.72px;font-size:10px;transform:scaleX(0.8953);color:#f2f2f2;z-index:1;-webkit-text-stroke:0.1px #f2f2f2">100%</span>
<span class="t" style="left:661.20px;top:305.58px;font-size:7.2px;transform:scaleX(0.9159);color:#9c9c9c;z-index:1;-webkit-text-stroke:0.25px #9c9c9c">1 min</span>
</section>
<section>
<div class="b" style="left:157px;top:342px;width:659px;height:178px;background:#1b1b1b;border-radius:7.500px;border:1px solid #2d2d2d;box-sizing:border-box;overflow:hidden"><div class="b" style="left:0;top:40px;width:660px;height:24px;background:#333333"></div><div class="b" style="left:0;top:64px;width:660px;height:39px;background:#242424;border-top:1px solid #242424;box-sizing:border-box"></div><div class="b" style="left:0;top:101px;width:660px;height:40px;background:#3b2812;border-top:1px solid #3b2812;box-sizing:border-box"></div><div class="b" style="left:0;top:139px;width:660px;height:39px;background:#242424;border-top:1px solid #242424;box-sizing:border-box"></div></div>
<svg class="i" style="left:174.70px;top:356.90px;z-index:0" width="12.6" height="12.6" viewBox="0 0 24 24" fill="none" stroke="#d8d8d8" stroke-width="2" stroke-linecap="round" stroke-linejoin="round" ><path d="M6 8a6 6 0 0 1 12 0c0 7 3 9 3 9H3s3-2 3-9"/><path d="M10.300 21a1.940 1.940 0 0 0 3.400 0"/></svg>
<div class="b" style="left:183.5px;top:351.1px;width:9.4px;height:9.4px;background:#f2476f;border-radius:5px;"></div>
<div class="b" style="left:187.7px;top:353.2px;width:1px;height:3.4px;background:#fff"></div><div class="b" style="left:187.7px;top:357.5px;width:1px;height:1px;background:#fff"></div>
<svg class="i" style="left:269.25px;top:357.75px;z-index:0" width="10.5" height="10.5" viewBox="0 0 24 24" fill="none" stroke="#d0d0d0" stroke-width="2" stroke-linecap="round" stroke-linejoin="round" ><circle cx="12" cy="5" r="1.700" fill="#d0d0d0" stroke="none"/><circle cx="12" cy="12" r="1.700" fill="#d0d0d0" stroke="none"/><circle cx="12" cy="19" r="1.700" fill="#d0d0d0" stroke="none"/></svg>
<div class="b" style="left:721.7px;top:352.5px;width:79.4px;height:21.4px;background:#53e5f4;border-radius:5px;"></div>
<svg class="i" style="left:730.85px;top:358.65px;z-index:0" width="9.5" height="9.5" viewBox="0 0 24 24" fill="none" stroke="#0c1416" stroke-width="2.3" stroke-linecap="round" stroke-linejoin="round" ><path d="M5 12h14"/><path d="M12 5v14"/></svg>
<svg class="i" style="left:785.00px;top:360.20px;z-index:0" width="6.6" height="6.6" viewBox="0 0 24 24" fill="none" stroke="#0c1416" stroke-width="3.2" stroke-linecap="round" stroke-linejoin="round" ><path d="m6 9 6 6 6-6"/></svg>
<div class="b" style="left:177.1px;top:416.2px;width:19px;height:19px;background:#0ae29f;border-radius:10px;"></div>
<svg class="i" style="left:182.15px;top:421.55px;z-index:0" width="8.9" height="8.9" viewBox="0 0 24 24" fill="none" stroke="#fff" stroke-width="2.9" stroke-linecap="round" stroke-linejoin="round" ><path d="M20 6 9 17l-5-5"/></svg>
<svg class="i" style="left:0;top:416.60px" width="835" height="18.6" viewBox="0 0 835 18.6"><rect x="380.55" y="0" width="2.36" height="18.6" rx="0.900" fill="#08eaa4"/><rect x="384.02" y="0" width="2.36" height="18.6" rx="0.900" fill="#08eaa4"/><rect x="387.49" y="0" width="2.36" height="18.6" rx="0.900" fill="#08eaa4"/><rect x="390.97" y="0" width="2.36" height="18.6" rx="0.900" fill="#08eaa4"/><rect x="394.44" y="0" width="2.36" height="18.6" rx="0.900" fill="#08eaa4"/><rect x="397.91" y="0" width="2.36" height="18.6" rx="0.900" fill="#08eaa4"/><rect x="401.38" y="0" width="2.36" height="18.6" rx="0.900" fill="#08eaa4"/><rect x="404.85" y="0" width="2.36" height="18.6" rx="0.900" fill="#08eaa4"/><rect x="408.33" y="0" width="2.36" height="18.6" rx="0.900" fill="#08eaa4"/><rect x="411.80" y="0" width="2.36" height="18.6" rx="0.900" fill="#08eaa4"/><rect x="415.27" y="0" width="2.36" height="18.6" rx="0.900" fill="#08eaa4"/><rect x="418.74" y="0" width="2.36" height="18.6" rx="0.900" fill="#08eaa4"/><rect x="422.21" y="0" width="2.36" height="18.6" rx="0.900" fill="#08eaa4"/><rect x="425.69" y="0" width="2.36" height="18.6" rx="0.900" fill="#08eaa4"/><rect x="429.16" y="0" width="2.36" height="18.6" rx="0.900" fill="#08eaa4"/><rect x="432.63" y="0" width="2.36" height="18.6" rx="0.900" fill="#08eaa4"/><rect x="436.10" y="0" width="2.36" height="18.6" rx="0.900" fill="#08eaa4"/><rect x="439.57" y="0" width="2.36" height="18.6" rx="0.900" fill="#08eaa4"/><rect x="443.05" y="0" width="2.36" height="18.6" rx="0.900" fill="#08eaa4"/><rect x="446.52" y="0" width="2.36" height="18.6" rx="0.900" fill="#08eaa4"/><rect x="449.99" y="0" width="2.36" height="18.6" rx="0.900" fill="#08eaa4"/><rect x="453.46" y="0" width="2.36" height="18.6" rx="0.900" fill="#08eaa4"/><rect x="456.93" y="0" width="2.36" height="18.6" rx="0.900" fill="#08eaa4"/><rect x="460.41" y="0" width="2.36" height="18.6" rx="0.900" fill="#08eaa4"/><rect x="463.88" y="0" width="2.36" height="18.6" rx="0.900" fill="#08eaa4"/><rect x="467.35" y="0" width="2.36" height="18.6" rx="0.900" fill="#08eaa4"/><rect x="470.82" y="0" width="2.36" height="18.6" rx="0.900" fill="#08eaa4"/><rect x="474.29" y="0" width="2.36" height="18.6" rx="0.900" fill="#08eaa4"/><rect x="477.77" y="0" width="2.36" height="18.6" rx="0.900" fill="#08eaa4"/><rect x="481.24" y="0" width="2.36" height="18.6" rx="0.900" fill="#08eaa4"/><rect x="484.71" y="0" width="2.36" height="18.6" rx="0.900" fill="#08eaa4"/><rect x="488.18" y="0" width="2.36" height="18.6" rx="0.900" fill="#08eaa4"/><rect x="491.65" y="0" width="2.36" height="18.6" rx="0.900" fill="#08eaa4"/><rect x="495.13" y="0" width="2.36" height="18.6" rx="0.900" fill="#08eaa4"/><rect x="498.60" y="0" width="2.36" height="18.6" rx="0.900" fill="#08eaa4"/><rect x="502.07" y="0" width="2.36" height="18.6" rx="0.900" fill="#08eaa4"/><rect x="505.54" y="0" width="2.36" height="18.6" rx="0.900" fill="#08eaa4"/><rect x="509.01" y="0" width="2.36" height="18.6" rx="0.900" fill="#08eaa4"/><rect x="512.49" y="0" width="2.36" height="18.6" rx="0.900" fill="#08eaa4"/><rect x="515.96" y="0" width="2.36" height="18.6" rx="0.900" fill="#08eaa4"/><rect x="519.43" y="0" width="2.36" height="18.6" rx="0.900" fill="#08eaa4"/><rect x="522.90" y="0" width="2.36" height="18.6" rx="0.900" fill="#08eaa4"/><rect x="526.37" y="0" width="2.36" height="18.6" rx="0.900" fill="#08eaa4"/><rect x="529.85" y="0" width="2.36" height="18.6" rx="0.900" fill="#08eaa4"/><rect x="533.32" y="0" width="2.36" height="18.6" rx="0.900" fill="#08eaa4"/><rect x="536.79" y="0" width="2.36" height="18.6" rx="0.900" fill="#08eaa4"/><rect x="540.26" y="0" width="2.36" height="18.6" rx="0.900" fill="#08eaa4"/><rect x="543.73" y="0" width="2.36" height="18.6" rx="0.900" fill="#08eaa4"/><rect x="547.21" y="0" width="2.36" height="18.6" rx="0.900" fill="#08eaa4"/><rect x="550.68" y="0" width="2.36" height="18.6" rx="0.900" fill="#08eaa4"/></svg>
<div class="b" style="left:654.7px;top:418.7px;width:30.9px;height:13.6px;background:#3a3a3a;border-radius:7px;"></div>
<svg class="i" style="left:718.60px;top:420.90px;z-index:0" width="10" height="10" viewBox="0 0 24 24" fill="none" stroke="#c9c9c9" stroke-width="2" stroke-linecap="round" stroke-linejoin="round" ><path d="M3 12a9 9 0 0 1 9-9 9.750 9.750 0 0 1 6.740 2.740L21 8"/><path d="M21 3v5h-5"/><path d="M21 12a9 9 0 0 1-9 9 9.750 9.750 0 0 1-6.740-2.740L3 16"/><path d="M8 16H3v5"/></svg>
<svg class="i" style="left:739.60px;top:420.90px;z-index:0" width="10" height="10" viewBox="0 0 24 24" fill="none" stroke="#c9c9c9" stroke-width="2" stroke-linecap="round" stroke-linejoin="round" ><rect x="14" y="3" width="6" height="18" rx="2.500"/><rect x="4" y="3" width="6" height="18" rx="2.500"/></svg>
<svg class="i" style="left:759.90px;top:420.90px;z-index:0" width="10" height="10" viewBox="0 0 24 24" fill="none" stroke="#c9c9c9" stroke-width="2" stroke-linecap="round" stroke-linejoin="round" ><path d="M12 3H5a2 2 0 0 0-2 2v14a2 2 0 0 0 2 2h14a2 2 0 0 0 2-2v-7"/><path d="M18.375 2.625a2.121 2.121 0 1 1 3 3L12 15l-4 1 1-4Z"/></svg>
<svg class="i" style="left:781.10px;top:421.00px;z-index:0" width="9.8" height="9.8" viewBox="0 0 24 24" fill="none" stroke="#c9c9c9" stroke-width="2" stroke-linecap="round" stroke-linejoin="round" ><path d="M3 6h18"/><path d="M19 6v14a2 2 0 0 1-2 2H7a2 2 0 0 1-2-2V6"/><path d="M8 6V4a2 2 0 0 1 2-2h4a2 2 0 0 1 2 2v2"/><path d="M12 11v6"/></svg>
<div class="b" style="left:177.1px;top:453.6px;width:19px;height:19px;background:#f97316;border-radius:10px;"></div>
<svg class="i" style="left:181.60px;top:458.80px;z-index:0" width="9.6" height="9.6" viewBox="0 0 24 24" fill="none" stroke="#fff" stroke-width="2.2" stroke-linecap="round" stroke-linejoin="round" ><rect x="14" y="3" width="6" height="18" rx="2.500"/><rect x="4" y="3" width="6" height="18" rx="2.500"/></svg>
<svg class="i" style="left:0;top:454.00px" width="835" height="18.6" viewBox="0 0 835 18.6"><rect x="380.55" y="0" width="2.36" height="18.6" rx="0.900" fill="#08eaa4"/><rect x="384.02" y="0" width="2.36" height="18.6" rx="0.900" fill="#08eaa4"/><rect x="387.49" y="0" width="2.36" height="18.6" rx="0.900" fill="#08eaa4"/><rect x="390.97" y="0" width="2.36" height="18.6" rx="0.900" fill="#08eaa4"/><rect x="394.44" y="0" width="2.36" height="18.6" rx="0.900" fill="#08eaa4"/><rect x="397.91" y="0" width="2.36" height="18.6" rx="0.900" fill="#08eaa4"/><rect x="401.38" y="0" width="2.36" height="18.6" rx="0.900" fill="#08eaa4"/><rect x="404.85" y="0" width="2.36" height="18.6" rx="0.900" fill="#08eaa4"/><rect x="408.33" y="0" width="2.36" height="18.6" rx="0.900" fill="#08eaa4"/><rect x="411.80" y="0" width="2.36" height="18.6" rx="0.900" fill="#08eaa4"/><rect x="415.27" y="0" width="2.36" height="18.6" rx="0.900" fill="#08eaa4"/><rect x="418.74" y="0" width="2.36" height="18.6" rx="0.900" fill="#08eaa4"/><rect x="422.21" y="0" width="2.36" height="18.6" rx="0.900" fill="#08eaa4"/><rect x="425.69" y="0" width="2.36" height="18.6" rx="0.900" fill="#08eaa4"/><rect x="429.16" y="0" width="2.36" height="18.6" rx="0.900" fill="#08eaa4"/><rect x="432.63" y="0" width="2.36" height="18.6" rx="0.900" fill="#08eaa4"/><rect x="436.10" y="0" width="2.36" height="18.6" rx="0.900" fill="#08eaa4"/><rect x="439.57" y="0" width="2.36" height="18.6" rx="0.900" fill="#08eaa4"/><rect x="443.05" y="0" width="2.36" height="18.6" rx="0.900" fill="#08eaa4"/><rect x="446.52" y="0" width="2.36" height="18.6" rx="0.900" fill="#08eaa4"/><rect x="449.99" y="0" width="2.36" height="18.6" rx="0.900" fill="#08eaa4"/><rect x="453.46" y="0" width="2.36" height="18.6" rx="0.900" fill="#08eaa4"/><rect x="456.93" y="0" width="2.36" height="18.6" rx="0.900" fill="#08eaa4"/><rect x="460.41" y="0" width="2.36" height="18.6" rx="0.900" fill="#08eaa4"/><rect x="463.88" y="0" width="2.36" height="18.6" rx="0.900" fill="#08eaa4"/><rect x="467.35" y="0" width="2.36" height="18.6" rx="0.900" fill="#08eaa4"/><rect x="470.82" y="0" width="2.36" height="18.6" rx="0.900" fill="#08eaa4"/><rect x="474.29" y="0" width="2.36" height="18.6" rx="0.900" fill="#08eaa4"/><rect x="477.77" y="0" width="2.36" height="18.6" rx="0.900" fill="#08eaa4"/><rect x="481.24" y="0" width="2.36" height="18.6" rx="0.900" fill="#08eaa4"/><rect x="484.71" y="0" width="2.36" height="18.6" rx="0.900" fill="#08eaa4"/><rect x="488.18" y="0" width="2.36" height="18.6" rx="0.900" fill="#08eaa4"/><rect x="491.65" y="0" width="2.36" height="18.6" rx="0.900" fill="#08eaa4"/><rect x="495.13" y="0" width="2.36" height="18.6" rx="0.900" fill="#08eaa4"/><rect x="498.60" y="0" width="2.36" height="18.6" rx="0.900" fill="#08eaa4"/><rect x="502.07" y="0" width="2.36" height="18.6" rx="0.900" fill="#08eaa4"/><rect x="505.54" y="0" width="2.36" height="18.6" rx="0.900" fill="#08eaa4"/><rect x="509.01" y="0" width="2.36" height="18.6" rx="0.900" fill="#08eaa4"/><rect x="512.49" y="0" width="2.36" height="18.6" rx="0.900" fill="#08eaa4"/><rect x="515.96" y="0" width="2.36" height="18.6" rx="0.900" fill="#08eaa4"/><rect x="519.43" y="0" width="2.36" height="18.6" rx="0.900" fill="#08eaa4"/><rect x="522.90" y="0" width="2.36" height="18.6" rx="0.900" fill="#08eaa4"/><rect x="526.37" y="0" width="2.36" height="18.6" rx="0.900" fill="#08eaa4"/><rect x="529.85" y="0" width="2.36" height="18.6" rx="0.900" fill="#08eaa4"/><rect x="533.32" y="0" width="2.36" height="18.6" rx="0.900" fill="#08eaa4"/><rect x="536.79" y="0" width="2.36" height="18.6" rx="0.900" fill="#08eaa4"/><rect x="540.26" y="0" width="2.36" height="18.6" rx="0.900" fill="#08eaa4"/><rect x="543.73" y="0" width="2.36" height="18.6" rx="0.900" fill="#08eaa4"/><rect x="547.21" y="0" width="2.36" height="18.6" rx="0.900" fill="#08eaa4"/><rect x="550.68" y="0" width="2.36" height="18.6" rx="0.900" fill="#08eaa4"/></svg>
<div class="b" style="left:654.7px;top:456.1px;width:30.9px;height:13.6px;background:#3a3a3a;border-radius:7px;"></div>
<svg class="i" style="left:718.60px;top:458.30px;z-index:0" width="10" height="10" viewBox="0 0 24 24" fill="none" stroke="#c9c9c9" stroke-width="2" stroke-linecap="round" stroke-linejoin="round" ><path d="M3 12a9 9 0 0 1 9-9 9.750 9.750 0 0 1 6.740 2.740L21 8"/><path d="M21 3v5h-5"/><path d="M21 12a9 9 0 0 1-9 9 9.750 9.750 0 0 1-6.740-2.740L3 16"/><path d="M8 16H3v5"/></svg>
<svg class="i" style="left:739.60px;top:458.30px;z-index:0" width="10" height="10" viewBox="0 0 24 24" fill="none" stroke="#c9c9c9" stroke-width="2" stroke-linecap="round" stroke-linejoin="round" ><polygon points="6 3 20 12 6 21 6 3"/></svg>
<svg class="i" style="left:759.90px;top:458.30px;z-index:0" width="10" height="10" viewBox="0 0 24 24" fill="none" stroke="#c9c9c9" stroke-width="2" stroke-linecap="round" stroke-linejoin="round" ><path d="M12 3H5a2 2 0 0 0-2 2v14a2 2 0 0 0 2 2h14a2 2 0 0 0 2-2v-7"/><path d="M18.375 2.625a2.121 2.121 0 1 1 3 3L12 15l-4 1 1-4Z"/></svg>
<svg class="i" style="left:781.10px;top:458.40px;z-index:0" width="9.8" height="9.8" viewBox="0 0 24 24" fill="none" stroke="#c9c9c9" stroke-width="2" stroke-linecap="round" stroke-linejoin="round" ><path d="M3 6h18"/><path d="M19 6v14a2 2 0 0 1-2 2H7a2 2 0 0 1-2-2V6"/><path d="M8 6V4a2 2 0 0 1 2-2h4a2 2 0 0 1 2 2v2"/><path d="M12 11v6"/></svg>
<div class="b" style="left:177.1px;top:491.6px;width:19px;height:19px;background:#fdb53e;border-radius:10px;"></div>
<svg class="i" style="left:181.90px;top:495.90px;z-index:0" width="9.4" height="9.4" viewBox="0 0 24 24" fill="none" stroke="#fff" stroke-width="2.7" stroke-linecap="round" stroke-linejoin="round" ><path d="m21.730 18-8-14a2 2 0 0 0-3.480 0l-8 14A2 2 0 0 0 4 21h16a2 2 0 0 0 1.730-3"/><path d="M12 9v4"/><path d="M12 17h.01"/></svg>
<svg class="i" style="left:0;top:492.00px" width="835" height="18.6" viewBox="0 0 835 18.6"><rect x="380.55" y="0" width="2.36" height="18.6" rx="0.900" fill="#08eaa4"/><rect x="384.02" y="0" width="2.36" height="18.6" rx="0.900" fill="#08eaa4"/><rect x="387.49" y="0" width="2.36" height="18.6" rx="0.900" fill="#08eaa4"/><rect x="390.97" y="0" width="2.36" height="18.6" rx="0.900" fill="#08eaa4"/><rect x="394.44" y="0" width="2.36" height="18.6" rx="0.900" fill="#08eaa4"/><rect x="397.91" y="0" width="2.36" height="18.6" rx="0.900" fill="#08eaa4"/><rect x="401.38" y="0" width="2.36" height="18.6" rx="0.900" fill="#08eaa4"/><rect x="404.85" y="0" width="2.36" height="18.6" rx="0.900" fill="#08eaa4"/><rect x="408.33" y="0" width="2.36" height="18.6" rx="0.900" fill="#08eaa4"/><rect x="411.80" y="0" width="2.36" height="18.6" rx="0.900" fill="#08eaa4"/><rect x="415.27" y="0" width="2.36" height="18.6" rx="0.900" fill="#08eaa4"/><rect x="418.74" y="0" width="2.36" height="18.6" rx="0.900" fill="#08eaa4"/><rect x="422.21" y="0" width="2.36" height="18.6" rx="0.900" fill="#08eaa4"/><rect x="425.69" y="0" width="2.36" height="18.6" rx="0.900" fill="#08eaa4"/><rect x="429.16" y="0" width="2.36" height="18.6" rx="0.900" fill="#08eaa4"/><rect x="432.63" y="0" width="2.36" height="18.6" rx="0.900" fill="#08eaa4"/><rect x="436.10" y="0" width="2.36" height="18.6" rx="0.900" fill="#08eaa4"/><rect x="439.57" y="0" width="2.36" height="18.6" rx="0.900" fill="#08eaa4"/><rect x="443.05" y="0" width="2.36" height="18.6" rx="0.900" fill="#08eaa4"/><rect x="446.52" y="0" width="2.36" height="18.6" rx="0.900" fill="#08eaa4"/><rect x="449.99" y="0" width="2.36" height="18.6" rx="0.900" fill="#08eaa4"/><rect x="453.46" y="0" width="2.36" height="18.6" rx="0.900" fill="#08eaa4"/><rect x="456.93" y="0" width="2.36" height="18.6" rx="0.900" fill="#08eaa4"/><rect x="460.41" y="0" width="2.36" height="18.6" rx="0.900" fill="#08eaa4"/><rect x="463.88" y="0" width="2.36" height="18.6" rx="0.900" fill="#08eaa4"/><rect x="467.35" y="0" width="2.36" height="18.6" rx="0.900" fill="#08eaa4"/><rect x="470.82" y="0" width="2.36" height="18.6" rx="0.900" fill="#08eaa4"/><rect x="474.29" y="0" width="2.36" height="18.6" rx="0.900" fill="#08eaa4"/><rect x="477.77" y="0" width="2.36" height="18.6" rx="0.900" fill="#08eaa4"/><rect x="481.24" y="0" width="2.36" height="18.6" rx="0.900" fill="#08eaa4"/><rect x="484.71" y="0" width="2.36" height="18.6" rx="0.900" fill="#08eaa4"/><rect x="488.18" y="0" width="2.36" height="18.6" rx="0.900" fill="#08eaa4"/><rect x="491.65" y="0" width="2.36" height="18.6" rx="0.900" fill="#08eaa4"/><rect x="495.13" y="0" width="2.36" height="18.6" rx="0.900" fill="#08eaa4"/><rect x="498.60" y="0" width="2.36" height="18.6" rx="0.900" fill="#08eaa4"/><rect x="502.07" y="0" width="2.36" height="18.6" rx="0.900" fill="#08eaa4"/><rect x="505.54" y="0" width="2.36" height="18.6" rx="0.900" fill="#08eaa4"/><rect x="509.01" y="0" width="2.36" height="18.6" rx="0.900" fill="#08eaa4"/><rect x="512.49" y="0" width="2.36" height="18.6" rx="0.900" fill="#08eaa4"/><rect x="515.96" y="0" width="2.36" height="18.6" rx="0.900" fill="#08eaa4"/><rect x="519.43" y="0" width="2.36" height="18.6" rx="0.900" fill="#08eaa4"/><rect x="522.90" y="0" width="2.36" height="18.6" rx="0.900" fill="#08eaa4"/><rect x="526.37" y="0" width="2.36" height="18.6" rx="0.900" fill="#08eaa4"/><rect x="529.85" y="0" width="2.36" height="18.6" rx="0.900" fill="#08eaa4"/><rect x="533.32" y="0" width="2.36" height="18.6" rx="0.900" fill="#08eaa4"/><rect x="536.79" y="0" width="2.36" height="18.6" rx="0.900" fill="#08eaa4"/><rect x="540.26" y="0" width="2.36" height="18.6" rx="0.900" fill="#08eaa4"/><rect x="543.73" y="0" width="2.36" height="18.6" rx="0.900" fill="#08eaa4"/><rect x="547.21" y="0" width="2.36" height="18.6" rx="0.900" fill="#08eaa4"/><rect x="550.68" y="0" width="2.36" height="18.6" rx="0.900" fill="#fdc650"/></svg>
<div class="b" style="left:654.7px;top:494.1px;width:30.9px;height:13.6px;background:#3a3a3a;border-radius:7px;"></div>
<svg class="i" style="left:718.60px;top:496.30px;z-index:0" width="10" height="10" viewBox="0 0 24 24" fill="none" stroke="#c9c9c9" stroke-width="2" stroke-linecap="round" stroke-linejoin="round" ><path d="M3 12a9 9 0 0 1 9-9 9.750 9.750 0 0 1 6.740 2.740L21 8"/><path d="M21 3v5h-5"/><path d="M21 12a9 9 0 0 1-9 9 9.750 9.750 0 0 1-6.740-2.740L3 16"/><path d="M8 16H3v5"/></svg>
<svg class="i" style="left:739.60px;top:496.30px;z-index:0" width="10" height="10" viewBox="0 0 24 24" fill="none" stroke="#c9c9c9" stroke-width="2" stroke-linecap="round" stroke-linejoin="round" ><rect x="14" y="3" width="6" height="18" rx="2.500"/><rect x="4" y="3" width="6" height="18" rx="2.500"/></svg>
<svg class="i" style="left:759.90px;top:496.30px;z-index:0" width="10" height="10" viewBox="0 0 24 24" fill="none" stroke="#c9c9c9" stroke-width="2" stroke-linecap="round" stroke-linejoin="round" ><path d="M12 3H5a2 2 0 0 0-2 2v14a2 2 0 0 0 2 2h14a2 2 0 0 0 2-2v-7"/><path d="M18.375 2.625a2.121 2.121 0 1 1 3 3L12 15l-4 1 1-4Z"/></svg>
<svg class="i" style="left:781.10px;top:496.40px;z-index:0" width="9.8" height="9.8" viewBox="0 0 24 24" fill="none" stroke="#c9c9c9" stroke-width="2" stroke-linecap="round" stroke-linejoin="round" ><path d="M3 6h18"/><path d="M19 6v14a2 2 0 0 1-2 2H7a2 2 0 0 1-2-2V6"/><path d="M8 6V4a2 2 0 0 1 2-2h4a2 2 0 0 1 2 2v2"/><path d="M12 11v6"/></svg>
<span class="t" style="left:197.80px;top:358.41px;font-size:9.6px;transform:scaleX(0.9840);color:#ededed;z-index:1;-webkit-text-stroke:0.15px #ededed">Your Company</span>
<span class="t" style="left:746.10px;top:359.30px;font-size:8.6px;transform:scaleX(0.9520);color:#0c1416;z-index:1;-webkit-text-stroke:0.25px #0c1416">Add New</span>
<span class="t" style="left:174.60px;top:391.28px;font-size:7px;transform:scaleX(0.8955);color:#b0b0b0;z-index:1;-webkit-text-stroke:0.1px #b0b0b0">STATUS</span>
<span class="t" style="left:210.40px;top:391.28px;font-size:7px;transform:scaleX(0.9500);color:#b0b0b0;z-index:1;-webkit-text-stroke:0.1px #b0b0b0">DOMAIN</span>
<span class="t" style="left:527.10px;top:391.28px;font-size:7px;transform:scaleX(0.8997);color:#b0b0b0;z-index:1;-webkit-text-stroke:0.1px #b0b0b0">UPTIME</span>
<span class="t" style="left:575.80px;top:391.28px;font-size:7px;transform:scaleX(0.8864);color:#b0b0b0;z-index:1;-webkit-text-stroke:0.1px #b0b0b0">PERCENTAGE</span>
<span class="t" style="left:650.50px;top:391.28px;font-size:7px;transform:scaleX(0.8896);color:#b0b0b0;z-index:1;-webkit-text-stroke:0.1px #b0b0b0">FREQUENCY</span>
<span class="t" style="left:739.90px;top:391.28px;font-size:7px;transform:scaleX(0.9542);color:#b0b0b0;z-index:1;-webkit-text-stroke:0.1px #b0b0b0">ACTIONS</span>
<span class="t" style="left:210.20px;top:422.07px;font-size:8.6px;transform:scaleX(0.9950);color:#ededed;z-index:1;-webkit-text-stroke:0.25px #ededed">wildlifeadventures.com</span>
<span class="t" style="left:585.90px;top:420.12px;font-size:10px;transform:scaleX(0.8953);color:#f2f2f2;z-index:1;-webkit-text-stroke:0.1px #f2f2f2">100%</span>
<span class="t" style="left:661.20px;top:421.98px;font-size:7.2px;transform:scaleX(0.9159);color:#9c9c9c;z-index:1;-webkit-text-stroke:0.25px #9c9c9c">1 min</span>
<span class="t" style="left:210.20px;top:459.47px;font-size:8.6px;transform:scaleX(0.9977);color:#ededed;z-index:1;-webkit-text-stroke:0.25px #ededed">safariworldtours.com</span>
<span class="t" style="left:585.90px;top:457.52px;font-size:10px;transform:scaleX(0.8953);color:#f2f2f2;z-index:1;-webkit-text-stroke:0.1px #f2f2f2">100%</span>
<span class="t" style="left:661.20px;top:459.38px;font-size:7.2px;transform:scaleX(0.9159);color:#9c9c9c;z-index:1;-webkit-text-stroke:0.25px #9c9c9c">1 min</span>
<span class="t" style="left:210.20px;top:497.47px;font-size:8.6px;transform:scaleX(0.9884);color:#ededed;z-index:1;-webkit-text-stroke:0.25px #ededed">securetraveladventures.com</span>
<span class="t" style="left:587.90px;top:495.52px;font-size:10px;transform:scaleX(0.9193);color:#f2f2f2;z-index:1;-webkit-text-stroke:0.1px #f2f2f2">98%</span>
<span class="t" style="left:661.20px;top:497.38px;font-size:7.2px;transform:scaleX(0.9159);color:#9c9c9c;z-index:1;-webkit-text-stroke:0.25px #9c9c9c">1 min</span>
</section>
<div role="menu">
<div class="b" style="left:689.8px;top:184.1px;width:111px;height:42.8px;background:#262626;border-radius:6px;border:1px solid #2b2b2b;box-sizing:border-box;box-shadow:0 2px 8px rgba(0,0,0,.45);z-index:4;"></div>
<svg class="i" style="left:697.90px;top:192.00px;z-index:5" width="9" height="9" viewBox="0 0 24 24" fill="none" stroke="#cfcfcf" stroke-width="1.5" stroke-linecap="round" stroke-linejoin="round" ><path d="M5 12h14"/><path d="M12 5v14"/></svg>
<svg class="i" style="left:696.90px;top:209.90px;z-index:5" width="10" height="10" viewBox="0 0 24 24" fill="none" stroke="#cfcfcf" stroke-width="1.7" stroke-linecap="round" stroke-linejoin="round" ><path d="M12 10v6"/><path d="M9 13h6"/><path d="M20 20a2 2 0 0 0 2-2V8a2 2 0 0 0-2-2h-7.900a2 2 0 0 1-1.690-.900L9.600 3.900A2 2 0 0 0 7.930 3H4a2 2 0 0 0-2 2v13a2 2 0 0 0 2 2Z"/></svg>
<span class="t" style="left:715.90px;top:192.80px;font-size:8.6px;transform:scaleX(0.9799);color:#e6e6e6;z-index:5;-webkit-text-stroke:0.25px #e6e6e6">Add New Monitor</span>
<span class="t" style="left:715.90px;top:211.20px;font-size:8.6px;transform:scaleX(0.9647);color:#e6e6e6;z-index:5;-webkit-text-stroke:0.25px #e6e6e6">Add New Group</span>
</div>
</main>
<div class="b" style="left:0;top:0;width:835px;height:570px;box-sizing:border-box;border:1px solid #2b2b2b;border-right-width:1.5px;border-bottom-width:1.5px;pointer-events:none"></div>
</body></html>
